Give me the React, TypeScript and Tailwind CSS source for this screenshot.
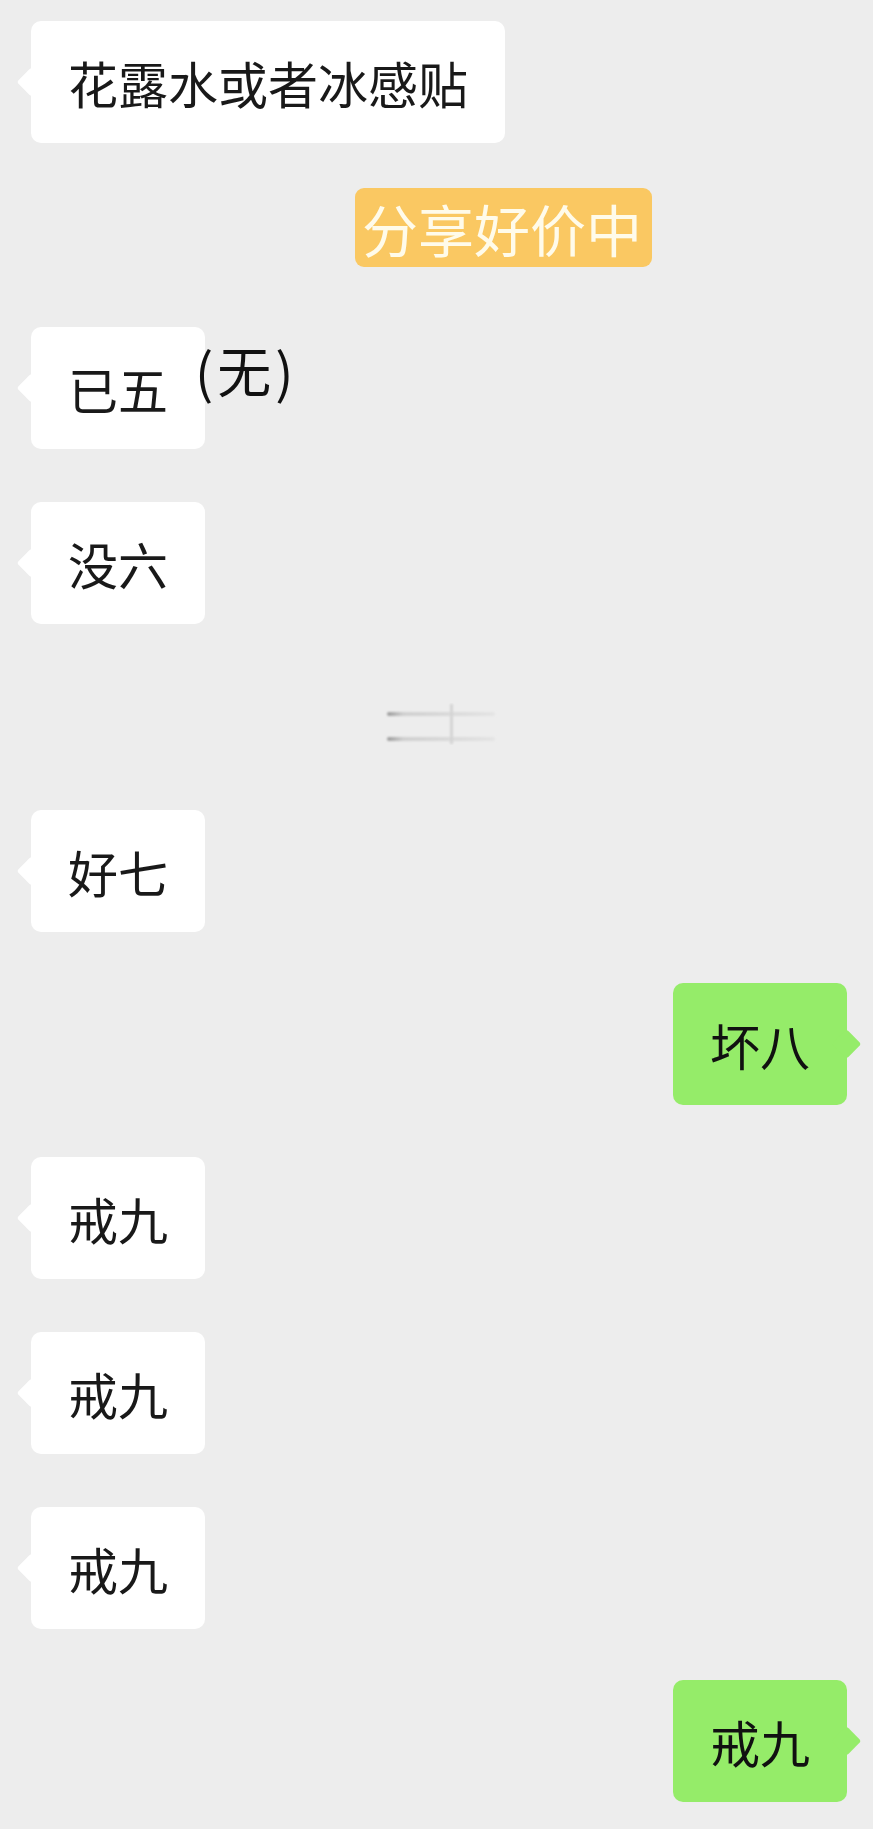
import React from "react";

const font = {
  fontFamily: '"Noto Sans CJK SC", "Noto Sans", sans-serif',
};

function Tail({ side, color }: { side: "left" | "right"; color: string }) {
  return (
    <span
      className={
        "absolute top-1/2 h-[21px] w-[21px] -translate-y-1/2 rotate-45 rounded-[3px] " +
        color +
        (side === "left" ? " -left-[10px]" : " -right-[10px]")
      }
    />
  );
}

function LeftBubble({ text, children }: { text: string; children?: React.ReactNode }) {
  return (
    <div className="relative ml-[31px] self-start">
      <div className="relative flex h-[122px] items-center rounded-[10px] bg-white px-[37px] text-[50px] leading-none text-[#191919]">
        <Tail side="left" color="bg-white" />
        <span className="relative">{text}</span>
      </div>
      {children}
    </div>
  );
}

function RightBubble({ text }: { text: string }) {
  return (
    <div className="relative mr-[26px] self-end">
      <div className="relative flex h-[122px] items-center rounded-[10px] bg-[#95ec69] px-[37px] text-[50px] leading-none text-[#111]">
        <Tail side="right" color="bg-[#95ec69]" />
        <span className="relative">{text}</span>
      </div>
    </div>
  );
}

// blurred timestamp, only faint strokes remain
function BlurredTime() {
  return (
    <div className="ml-[384px] h-[42px] w-[115px] self-start">
      <svg width="115" height="42" viewBox="0 0 115 42">
        <defs>
          <linearGradient id="fade" x1="0" x2="1" y1="0" y2="0">
            <stop offset="0" stopColor="#9a9a9a" />
            <stop offset="0.15" stopColor="#cfcfcf" />
            <stop offset="1" stopColor="#e4e4e4" />
          </linearGradient>
          <filter id="soft">
            <feGaussianBlur stdDeviation="0.9" />
          </filter>
        </defs>
        <g filter="url(#soft)">
          <rect x="3" y="9" width="108" height="4" rx="2" fill="url(#fade)" />
          <rect x="3" y="34" width="108" height="4" rx="2" fill="url(#fade)" />
          <rect x="66" y="1" width="3" height="40" fill="#d4d4d4" />
        </g>
      </svg>
    </div>
  );
}

export default function App() {
  return (
    <div className="flex min-h-[1829px] w-full flex-col bg-[#ededed] pt-[21px]" style={font}>
      <LeftBubble text="花露水或者冰感贴" />

      <div className="mt-[45px] ml-[355px] flex h-[79px] w-[297px] items-center self-start rounded-[9px] bg-[#fac862] pl-[7px] text-[56px] leading-none text-[#fffbea]">
        分享好价中
      </div>

      <div className="mt-[60px] flex flex-col">
        <LeftBubble text="已五">
          <span className="absolute left-[164px] top-[16px] flex items-center text-[54px] leading-none text-[#111]">
            <span>(</span>
            <span className="ml-[4px]">无</span>
            <span className="ml-[4px]">)</span>
          </span>
        </LeftBubble>
      </div>

      <div className="mt-[53px] flex flex-col">
        <LeftBubble text="没六" />
      </div>

      <div className="mt-[79px] flex flex-col">
        <BlurredTime />
      </div>

      <div className="mt-[65px] flex flex-col">
        <LeftBubble text="好七" />
      </div>

      <div className="mt-[51px] flex flex-col">
        <RightBubble text="坏八" />
      </div>

      <div className="mt-[52px] flex flex-col gap-[53px]">
        <LeftBubble text="戒九" />
        <LeftBubble text="戒九" />
        <LeftBubble text="戒九" />
      </div>

      <div className="mt-[51px] flex flex-col">
        <RightBubble text="戒九" />
      </div>
    </div>
  );
}
